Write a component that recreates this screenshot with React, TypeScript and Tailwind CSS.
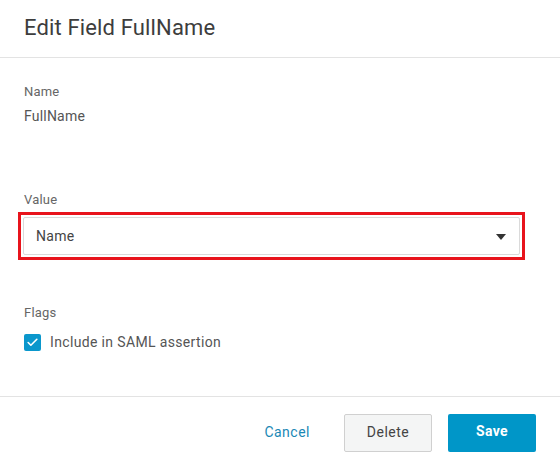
import { Check } from 'lucide-react';

const App = () => {
  return (
    <div
      className="w-[560px] h-[468px] bg-white flex flex-col text-[#333]"
      style={{ fontFamily: 'Roboto, "Liberation Sans", sans-serif' }}
    >
      {/* Header */}
      <div className="h-[58px] flex items-center px-6 border-b border-[#e3e3e3] shrink-0">
        <h1 className="text-[22px] text-[#3d3d3d] tracking-[0.15px] leading-none -mt-[2px]">Edit Field FullName</h1>
      </div>

      {/* Body */}
      <div className="flex-1 flex flex-col pt-[24px]">
        <div className="px-6 text-[13px] text-[#666] leading-[20px] tracking-[0.2px]">Name</div>
        <div className="px-6 mt-[4px] text-[14px] text-[#555] leading-[20px] tracking-[0.2px]">FullName</div>

        <div className="px-6 mt-[64px] text-[13px] text-[#666] leading-[20px] tracking-[0.2px]">Value</div>
        <div className="ml-[18px] mt-[2px] w-[507px] h-[48px] border-[3px] border-[#e8141c] p-[2px]">
          <div className="h-[38px] border border-[#dadada] rounded-[2px] flex items-center justify-between pl-3 pr-[13px]">
            <span className="text-[14px] text-[#444] tracking-[0.3px]">Name</span>
            <svg width="10" height="6" viewBox="0 0 10 6" className="mt-[1px]">
              <path d="M0 0h10L5 6z" fill="#333" />
            </svg>
          </div>
        </div>

        <div className="px-6 mt-[43px] text-[13px] text-[#666] leading-[20px] tracking-[0.2px]">Flags</div>
        <div className="px-6 mt-[9px] flex items-center gap-[9px]">
          <div className="w-[17px] h-[17px] rounded-[2px] bg-[#0a97cc] flex items-center justify-center">
            <Check className="w-[13px] h-[13px] text-white" strokeWidth={3} />
          </div>
          <span className="text-[14px] text-[#555] tracking-[0.35px]">Include in SAML assertion</span>
        </div>
      </div>

      {/* Footer */}
      <div className="h-[72px] border-t border-[#e3e3e3] flex items-center justify-end pr-6 shrink-0">
        <button className="text-[14px] text-[#1a88b5] tracking-[0.5px] mr-[34px]">Cancel</button>
        <button className="w-[88px] h-[38px] rounded-[2px] border border-[#d0d0d0] bg-[#f4f5f5] text-[14px] text-[#444] tracking-[0.5px] mr-4">
          Delete
        </button>
        <button className="w-[88px] h-[38px] rounded-[2px] bg-[#0096c8] text-[14px] font-bold text-white tracking-[0.3px] pb-[2px]">
          Save
        </button>
      </div>
    </div>
  );
};

export default App;
